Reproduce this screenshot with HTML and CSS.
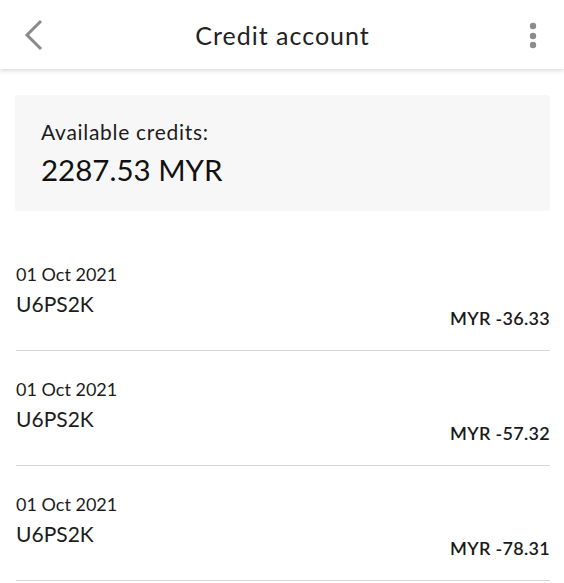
FILE: index.html
```html
<!DOCTYPE html>
<html lang="en">
<head>
    <meta charset="UTF-8">
    <meta name="viewport" content="width=device-width, initial-scale=1.0">
    <title>Credit account</title>
    <link rel="stylesheet" href="styles.css">
</head>
<body>
    <header class="topbar">
        <svg class="back" width="20" height="32" viewBox="0 0 20 32">
            <polyline points="17,2 3,16 17,30" fill="none" stroke="#8a8a8a" stroke-width="3"/>
        </svg>
        <h1 class="title">Credit account</h1>
        <svg class="more" width="10" height="30" viewBox="0 0 10 30">
            <circle cx="5" cy="5" r="3.2" fill="#8c8c8c"/>
            <circle cx="5" cy="15" r="3.2" fill="#8c8c8c"/>
            <circle cx="5" cy="24" r="3.2" fill="#8c8c8c"/>
        </svg>
    </header>

    <main class="content">
        <div class="card">
            <p class="card-label">Available credits:</p>
            <p class="card-value">2287.53 MYR</p>
        </div>

        <ul class="list" id="list"></ul>
    </main>

    <script>
        const items = [
            {date: "01 Oct 2021", code: "U6PS2K", amount: "MYR -36.33"},
            {date: "01 Oct 2021", code: "U6PS2K", amount: "MYR -57.32"},
            {date: "01 Oct 2021", code: "U6PS2K", amount: "MYR -78.31"}
        ];

        const list = document.getElementById("list");
        items.forEach(item => {
            const li = document.createElement("li");
            li.className = "row";
            li.innerHTML = `<div class="row-left"><div class="date">${item.date}</div><div class="code">${item.code}</div></div><div class="amount">${item.amount}</div>`;
            list.appendChild(li);
        });
    </script>
</body>
</html>
```

FILE: styles.css
```css
body {
    margin: 0;
    background: #fff;
    font-family: Lato, "Noto Sans", sans-serif;
    color: #1c1c1c;
}
.topbar {
    height: 69px;
    display: flex;
    align-items: center;
    justify-content: space-between;
    padding: 0 26px 0 24px;
    box-shadow: 0 2px 4px rgba(0, 0, 0, 0.14);
    position: relative;
}
.back {
    display: block;
}
.more {
    display: block;
    margin-top: 2px;
}
.title {
    margin: 0 7px 0 0;
    font-size: 25px;
    font-weight: 400;
    color: #222;
    letter-spacing: 1px;
}
.content {
    padding: 26px 14px 0 16px;
}
.card {
    background: #f7f7f7;
    margin-left: -1px;
    padding: 25px 26px 23px;
    border-radius: 2px;
}
.card-label {
    margin: 0;
    font-size: 21px;
    line-height: 24px;
    letter-spacing: 0.7px;
}
.card-value {
    margin: 8px 0 0;
    font-size: 29.5px;
    line-height: 36px;
    color: #111;
}
.list {
    list-style: none;
    margin: 25px 0 0;
    padding: 0;
}
.row {
    display: flex;
    justify-content: space-between;
    align-items: flex-end;
    padding: 27px 0 21px;
    border-bottom: 1px solid #d6d6d6;
}
.row-left {
    padding-bottom: 12px;
}
.date {
    font-size: 18px;
    line-height: 22px;
}
.code {
    margin-top: 6px;
    font-size: 21px;
    line-height: 26px;
}
.amount {
    font-size: 18px;
    line-height: 22px;
    font-weight: 600;
    letter-spacing: 0.3px;
    color: #1a1a1a;
}
```
